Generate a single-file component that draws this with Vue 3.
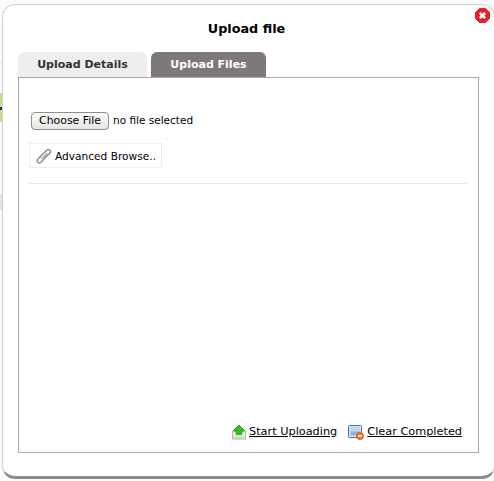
<script setup>
const tabs = [
  { label: 'Upload Details', active: false },
  { label: 'Upload Files', active: true }
]
</script>

<template>
  <div class="page">
    <div class="modal">
      <button class="close" aria-label="Close">
        <svg width="15" height="15" viewBox="0 0 15 15">
          <path d="M4.5 .5h6l4 4v6l-4 4h-6l-4-4v-6z" fill="#ee1c25" stroke="#e0262c" stroke-linejoin="round" />
          <path d="M4.8 4.8l5.4 5.400M10.200 4.800l-5.400 5.400" stroke="#fff" stroke-width="2.600" />
        </svg>
      </button>
      <h1 class="title">Upload file</h1>
      <div class="tabs">
        <div v-for="tab in tabs" :key="tab.label" class="tab" :class="{ active: tab.active }">{{ tab.label }}</div>
      </div>
      <div class="panel">
        <div class="file-row">
          <button class="choose">Choose File</button>
          <span class="file-status">no file selected</span>
        </div>
        <div class="browse">
          <svg class="clip" width="16" height="16" viewBox="0 0 16 16">
            <path d="M11.200 1.800 1.800 11.200a2.100 2.100 0 0 0 3 3l9.400-9.400a2.200 2.200 0 0 0-3-3L3.500 9.300" fill="none" stroke="#8c8c8c" stroke-width="1.400" stroke-linecap="round" />
            <path d="M11 5.500 6 10.500" fill="none" stroke="#a0a0a0" stroke-width="1.200" stroke-linecap="round" />
          </svg>
          <span>Advanced Browse..</span>
        </div>
        <div class="rule"></div>
        <div class="actions">
          <a class="action">
            <svg width="14" height="16" viewBox="0 0 15 16">
              <path d="M.5 7.500h14v8H.5z" fill="#eef0e6" stroke="#a9ad9d" />
              <path d="M2 12.500h11M2 14h11" stroke="#cfd2c4" />
              <path d="M7.500 .5 13.500 6.500H10.500v4h-6v-4H1.500z" fill="#2fc21f" stroke="#1d9a17" />
            </svg>
            <span>Start Uploading</span>
          </a>
          <a class="action">
            <svg width="16" height="16" viewBox="0 0 16 16">
              <rect x=".5" y="1.500" width="13" height="12" rx="1" fill="#dbe6f3" stroke="#3f6fb0" />
              <rect x="2.500" y="3.500" width="9" height="8" fill="#8fb0d8" />
              <rect x="2.500" y="3.500" width="9" height="4" fill="#c5d6ea" />
              <circle cx="12" cy="12" r="3.500" fill="#ee7420" stroke="#c9560f" stroke-width=".8" />
              <path d="M10 12h4" stroke="#fff" stroke-width="1.500" />
            </svg>
            <span>Clear Completed</span>
          </a>
        </div>
      </div>
    </div>
  </div>
</template>

<style>
html, body { margin: 0; background: #fff; }
</style>

<style scoped>
.page {
  width: 494px;
  height: 481px;
  overflow: hidden;
  box-sizing: border-box;
  padding: 4px 0 0 2px;
  font-family: "DejaVu Sans", sans-serif;
  color: #000;
  background:
    linear-gradient(#17325c, #17325c) 0 107px / 2px 3px no-repeat,
    linear-gradient(#c3dc8e, #c3dc8e) 0 93px / 2px 29px no-repeat,
    linear-gradient(#ddd, #ddd) 0 62px / 2px 1px no-repeat,
    linear-gradient(#e4e4e4, #e4e4e4) 0 194px / 2px 16px no-repeat,
    #fafafa;
}
.modal {
  position: relative;
  box-sizing: border-box;
  width: 493px;
  height: 475px;
  padding: 0 15px;
  background: #fff;
  border-radius: 13px;
  border-top: 1px solid #d2d2d2;
  border-left: 1px solid #d2d2d2;
  border-right: 1px solid #d2d2d2;
  border-bottom: 3px solid #8c8c8c;
}
.close {
  position: absolute;
  top: 3px;
  right: 4px;
  width: 15px;
  height: 15px;
  padding: 0;
  border: 0;
  background: none;
  display: block;
}
.close svg { display: block; }
.title {
  margin: 0;
  padding-top: 15px;
  height: 32px;
  box-sizing: border-box;
  font-size: 12.8px;
  line-height: 17px;
  font-weight: 700;
  text-align: center;
  padding-right: 4px;
}
.tabs {
  display: flex;
  gap: 4px;
  margin-top: 15px;
  height: 25px;
}
.tab {
  box-sizing: border-box;
  width: 129px;
  padding-top: 1px;
  height: 25px;
  line-height: 23px;
  text-align: center;
  font-size: 11px;
  font-weight: 700;
  color: #333;
  background: #eeeeee;
  border-radius: 6px 6px 0 0;
}
.tab.active {
  width: 115px;
  color: #fff;
  background: #7e7878;
}
.panel {
  box-sizing: border-box;
  width: 461px;
  height: 376px;
  padding: 33px 11px 0 10px;
  border: 1px solid #aaaaaa;
  display: flex;
  flex-direction: column;
}
.file-row {
  display: flex;
  align-items: center;
  gap: 4px;
  padding-left: 2px;
  height: 19px;
}
.choose {
  box-sizing: border-box;
  width: 78px;
  height: 18px;
  padding: 0;
  font-family: inherit;
  font-size: 10.9px;
  line-height: 16px;
  color: #000;
  background: linear-gradient(#fbfbfb, #e6e6e6);
  border: 1px solid #8e8e8e;
  border-radius: 4px;
}
.file-status { font-size: 10.5px; line-height: 16px; margin-bottom: 2px; }
.browse {
  box-sizing: border-box;
  display: flex;
  align-items: center;
  gap: 3px;
  margin-top: 13px;
  width: 133px;
  height: 25px;
  padding-left: 6px;
  font-size: 10.6px;
  border: 1px solid #eeeeee;
}
.clip { flex: none; }
.rule {
  margin-top: 15px;
  height: 1px;
  background: #e9e9e9;
}
.actions {
  margin-top: auto;
  margin-bottom: 12px;
  display: flex;
  justify-content: flex-end;
  gap: 11px;
  padding-right: 5px;
}
.action {
  display: flex;
  align-items: center;
  gap: 3px;
  font-size: 11.3px;
  line-height: 16px;
  height: 16px;
}
.action svg { flex: none; }
.action span { text-decoration: underline; }
</style>
